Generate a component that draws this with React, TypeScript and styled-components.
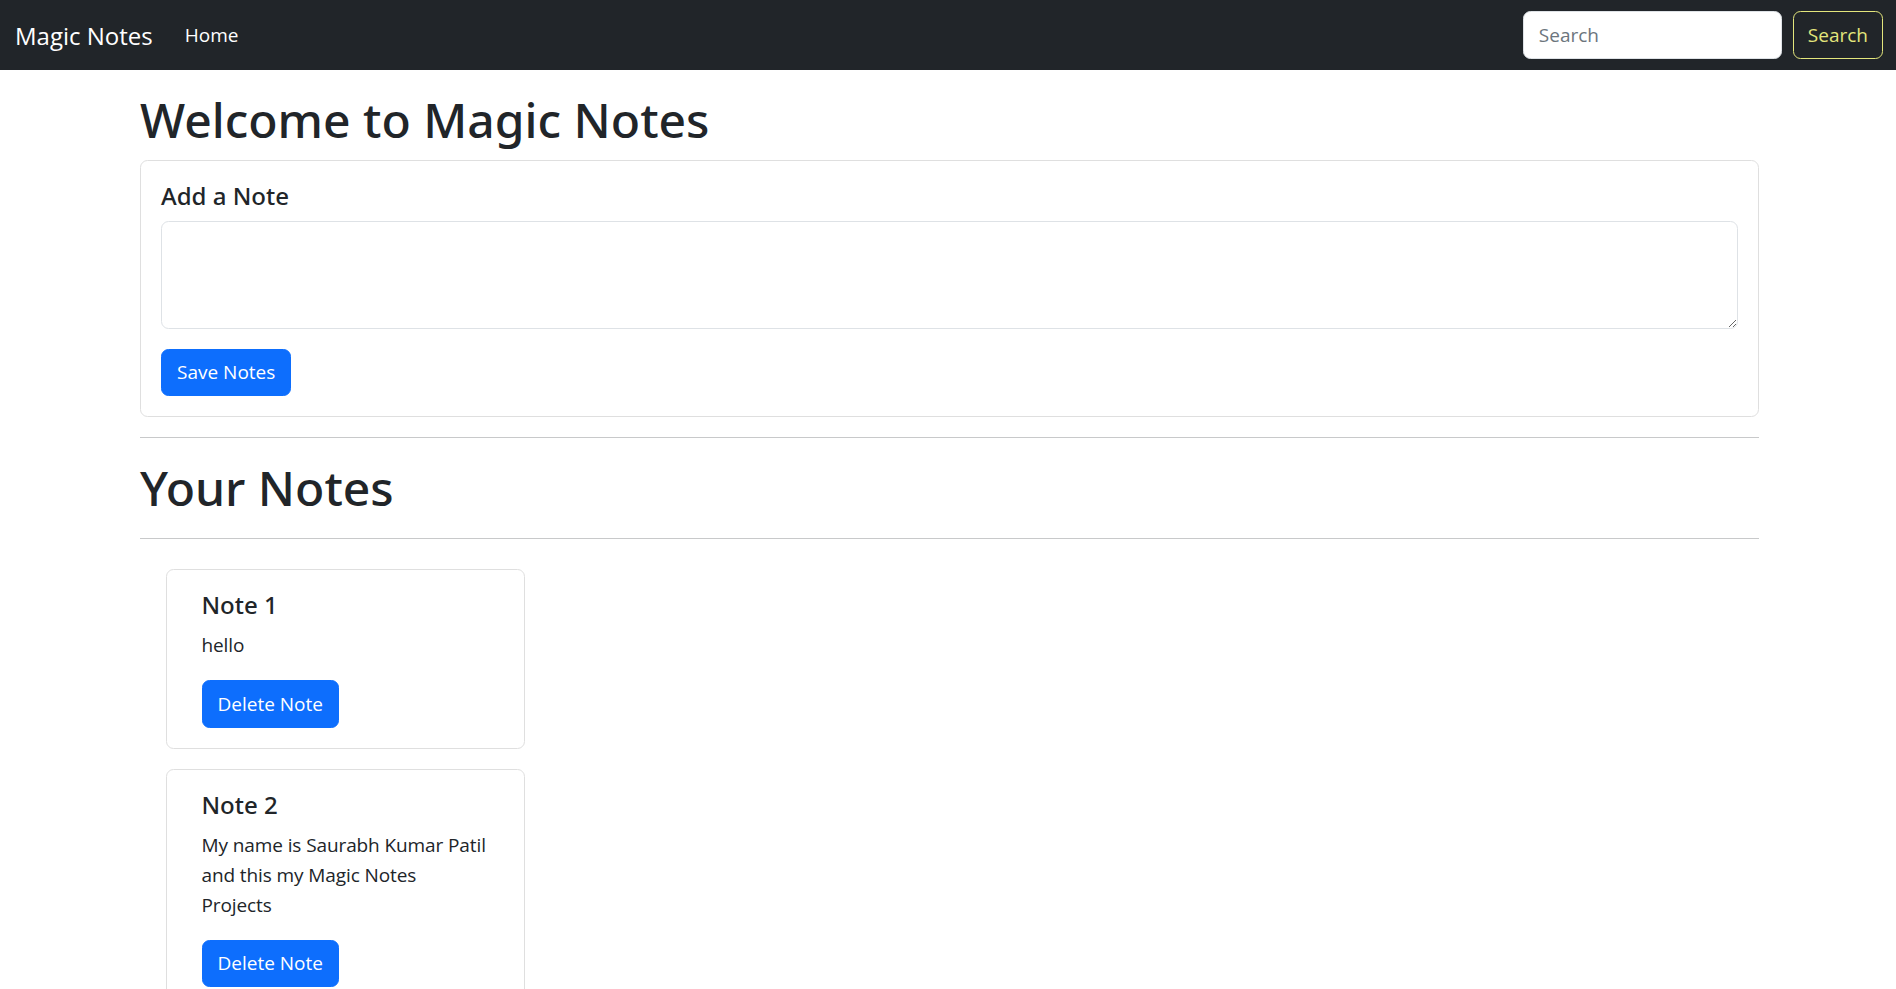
import React from "react";
import styled, { createGlobalStyle } from "styled-components";

const GlobalStyle = createGlobalStyle`
  html { scrollbar-width: none; }
  body {
    margin: 0;
    font-family: "Segoe UI", "Open Sans", "Noto Sans", sans-serif;
    color: #212529;
    background: #fff;
    font-size: 19px;
    line-height: 30px;
  }
  *, *::before, *::after { box-sizing: border-box; }
`;

const Navbar = styled.nav`
  height: 70px;
  background: #212529;
  display: flex;
  align-items: center;
  padding: 0 13px 0 15px;
`;

const Brand = styled.a`
  font-size: 24px;
  line-height: 37px;
  color: #fff;
  margin-right: 22px;
  text-decoration: none;
`;

const NavLink = styled.a`
  font-size: 19px;
  line-height: 30px;
  color: #fff;
  padding: 0 10px;
  text-decoration: none;
`;

const Spacer = styled.div`
  flex: 1;
`;

const SearchForm = styled.form`
  display: flex;
  gap: 11px;
`;

const SearchInput = styled.input`
  width: 259px;
  height: 47.5px;
  border: 1px solid #dee2e6;
  border-radius: 7.5px;
  padding: 7px 15px;
  font: inherit;
  color: #212529;
  outline: none;
  &::placeholder { color: #6c757d; }
`;

const SearchButton = styled.button`
  height: 47.5px;
  padding: 0 14px;
  background: transparent;
  border: 1px solid #e3e67c;
  border-radius: 7.5px;
  color: #e3e67c;
  font: inherit;
`;

const Container = styled.main`
  width: 1619px;
  margin: 0 0 0 140px;
  padding-top: 20px;
`;

const Heading = styled.h1`
  font-family: "Segoe UI", "Noto Sans", "Open Sans", sans-serif;
  font-size: 48px;
  line-height: 60px;
  font-weight: 500;
  margin: 0 0 10px;
`;

const Card = styled.div`
  border: 1px solid #dfdfdf;
  border-radius: 7.5px;
  padding: 20px;
`;

const CardTitle = styled.h5`
  font-family: "Segoe UI", "Noto Sans", "Open Sans", sans-serif;
  font-size: 24px;
  line-height: 30px;
  font-weight: 500;
  margin: 0 0 10px;
`;

const TextArea = styled.textarea`
  display: block;
  width: 100%;
  height: 107.5px;
  margin: 0 0 20px;
  padding: 7px 15px;
  border: 1px solid #dee2e6;
  border-radius: 7.5px;
  font: inherit;
  resize: vertical;
  outline: none;
`;

const PrimaryButton = styled.button`
  height: 47.5px;
  padding: 0 15px;
  background: #0d6efd;
  color: #fff;
  border: 1px solid #0d6efd;
  border-radius: 7.5px;
  font: inherit;
`;

const Divider = styled.hr`
  margin: 20px 0;
  border: 0;
  border-top: 1.25px solid #c8c9ca;
`;

const NotesColumn = styled.div`
  display: flex;
  flex-direction: column;
  align-items: flex-start;
  padding-left: 15.5px;
`;

const NoteCard = styled.div`
  width: 359px;
  margin: 10px;
  border: 1px solid #dfdfdf;
  border-radius: 7.5px;
  padding: 20px 35px;
`;

const NoteText = styled.p`
  margin: 0 0 20px;
  letter-spacing: -0.1px;
`;

const notes = [
  { title: "Note 1", text: "hello" },
  { title: "Note 2", text: "My name is Saurabh Kumar Patil and this my Magic Notes Projects" },
];

export default function App() {
  return (
    <>
      <GlobalStyle />
      <Navbar>
        <Brand href="#">Magic Notes</Brand>
        <NavLink href="#">Home</NavLink>
        <Spacer />
        <SearchForm onSubmit={(e) => e.preventDefault()}>
          <SearchInput type="search" placeholder="Search" />
          <SearchButton type="submit">Search</SearchButton>
        </SearchForm>
      </Navbar>
      <Container>
        <Heading>Welcome to Magic Notes</Heading>
        <Card>
          <CardTitle>Add a Note</CardTitle>
          <TextArea rows={3} />
          <PrimaryButton>Save Notes</PrimaryButton>
        </Card>
        <Divider />
        <Heading>Your Notes</Heading>
        <Divider />
        <NotesColumn>
          {notes.map((n) => (
            <NoteCard key={n.title}>
              <CardTitle>{n.title}</CardTitle>
              <NoteText>{n.text}</NoteText>
              <PrimaryButton>Delete Note</PrimaryButton>
            </NoteCard>
          ))}
        </NotesColumn>
      </Container>
    </>
  );
}
